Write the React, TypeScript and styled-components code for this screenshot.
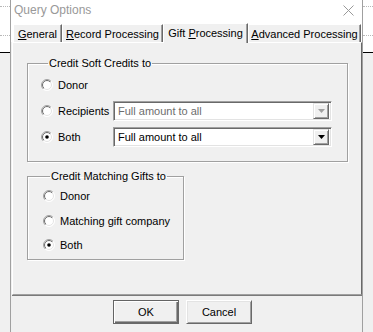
import React from 'react';
import styled, { createGlobalStyle } from 'styled-components';

const FONT = '"Liberation Sans", Arial, sans-serif';

const GlobalStyle = createGlobalStyle`
  html, body {
    margin: 0;
    padding: 0;
    background: #fff;
  }
  body {
    font-family: ${FONT};
    font-size: 11px;
    color: #000;
  }
`;

const Screen = styled.div`
  display: flex;
  width: 373px;
  height: 332px;
  overflow: hidden;
  background: #fff;
`;

const Backdrop = styled.div`
  width: 10px;
  display: flex;
  flex-direction: column;
`;

const GridLine = styled.div<{ $h: number; $solid?: boolean }>`
  height: ${(p) => p.$h}px;
  border-bottom: 1px ${(p) => (p.$solid ? 'solid #000' : 'dotted #b8b8b8')};
`;

const BackdropFill = styled.div`
  flex: 1;
  background: #f0f0f0;
`;

const Window = styled.div`
  width: 353px;
  box-sizing: border-box;
  border-left: 1px solid #a0a0a0;
  border-right: 1px solid #a0a0a0;
  display: flex;
  flex-direction: column;
  background: #f0f0f0;
`;

const TitleBar = styled.div`
  height: 20px;
  background: #fff;
  display: flex;
  align-items: center;
  justify-content: space-between;
  padding: 0 8px 2px 3px;
`;

const Title = styled.span`
  font-size: 12px;
  color: #999;
`;

const TabStrip = styled.div`
  height: 20px;
  background: #fff;
  display: flex;
  align-items: flex-start;
  padding-left: 2px;
  position: relative;
  z-index: 1;
`;

const Tab = styled.div<{ $w: number; $active?: boolean }>`
  width: ${(p) => p.$w}px;
  box-sizing: border-box;
  margin-top: ${(p) => (p.$active ? 1 : 2)}px;
  height: ${(p) => (p.$active ? 20 : 18)}px;
  background: #f0f0f0;
  border-top: 1px solid #fff;
  border-left: 1px solid #fff;
  border-right: 1px solid #696969;
  box-shadow: inset -1px 0 0 #a0a0a0;
  display: flex;
  align-items: center;
  justify-content: center;
  padding-bottom: ${(p) => (p.$active ? 2 : 0)}px;
  white-space: nowrap;
`;

const Panel = styled.div`
  margin-left: 1px;
  height: 253px;
  box-sizing: border-box;
  border-top: 1px solid #fff;
  border-left: 1px solid #fff;
  border-right: 1px solid #696969;
  border-bottom: 1px solid #a0a0a0;
  box-shadow: 0 1px 0 #7a7a7a;
  padding: 14px 0 0 14px;
  display: flex;
  flex-direction: column;
  align-items: flex-start;
`;

const Group = styled.fieldset<{ $w: number; $pad: string; $top?: number }>`
  width: ${(p) => p.$w}px;
  box-sizing: border-box;
  margin: ${(p) => p.$top ?? 0}px 0 0;
  padding: ${(p) => p.$pad};
  border: 1px solid #a0a0a0;
  box-shadow: inset 1px 1px 0 #fff, 1px 1px 0 #fff;
  display: flex;
  flex-direction: column;
`;

const Legend = styled.legend`
  padding: 0 1px;
  margin-left: 7px;
  line-height: 13px;
  font-size: 11px;
`;

const Row = styled.div<{ $gap?: number; $cols?: string }>`
  display: grid;
  grid-template-columns: ${(p) => p.$cols ?? '72px 219px'};
  align-items: center;
  height: 22px;
  margin-bottom: ${(p) => p.$gap ?? 0}px;
`;

const Choice = styled.label`
  display: flex;
  align-items: center;
  gap: 5px;
  white-space: nowrap;

  svg {
    flex-shrink: 0;
  }
`;

const Combo = styled.div<{ $disabled?: boolean }>`
  height: 20px;
  box-sizing: border-box;
  background: #fff;
  border-top: 1px solid #a0a0a0;
  border-left: 1px solid #a0a0a0;
  border-right: 1px solid #fff;
  border-bottom: 1px solid #fff;
  box-shadow: inset 1px 1px 0 #696969, inset -1px -1px 0 #e3e3e3;
  display: flex;
  align-items: center;
  padding: 2px 2px 2px 4px;
  color: ${(p) => (p.$disabled ? '#6d6d6d' : '#000')};
`;

const ComboText = styled.span`
  flex: 1;
`;

const DropButton = styled.div`
  width: 16px;
  height: 16px;
  box-sizing: border-box;
  background: #f0f0f0;
  border-top: 1px solid #e3e3e3;
  border-left: 1px solid #e3e3e3;
  border-right: 1px solid #696969;
  border-bottom: 1px solid #696969;
  box-shadow: inset 1px 1px 0 #fff, inset -1px -1px 0 #a0a0a0;
  display: flex;
  align-items: center;
  justify-content: center;
`;

const ButtonBar = styled.div`
  display: flex;
  justify-content: center;
  gap: 7px;
  padding: 5px 8px 0 0;
`;

const Button = styled.div<{ $default?: boolean }>`
  width: 66px;
  height: 24px;
  box-sizing: border-box;
  background: #f0f0f0;
  display: flex;
  align-items: center;
  justify-content: center;
  border: 1px solid ${(p) => (p.$default ? '#646464' : '#f0f0f0')};
  border-top-color: ${(p) => (p.$default ? '#646464' : '#fff')};
  border-left-color: ${(p) => (p.$default ? '#646464' : '#fff')};
  border-right-color: #696969;
  border-bottom-color: #696969;
  box-shadow: ${(p) =>
    p.$default
      ? 'inset 1px 1px 0 #fff, inset -1px -1px 0 #696969, inset -2px -2px 0 #a0a0a0'
      : 'inset 1px 1px 0 #e3e3e3, inset -1px -1px 0 #a0a0a0'};
`;

const Radio: React.FC<{ checked?: boolean }> = ({ checked }) => (
  <svg width="12" height="12" viewBox="0 0 12 12">
    <defs>
      <linearGradient id="rOuter" x1="0" y1="0" x2="1" y2="1">
        <stop offset="0.5" stopColor="#a0a0a0" />
        <stop offset="0.5" stopColor="#ffffff" />
      </linearGradient>
      <linearGradient id="rInner" x1="0" y1="0" x2="1" y2="1">
        <stop offset="0.5" stopColor="#696969" />
        <stop offset="0.5" stopColor="#e3e3e3" />
      </linearGradient>
    </defs>
    <circle cx="6" cy="6" r="5.5" fill="#fff" stroke="url(#rOuter)" strokeWidth="1" />
    <circle cx="6" cy="6" r="4.5" fill="#fff" stroke="url(#rInner)" strokeWidth="1" />
    {checked && <circle cx="6" cy="6" r="1.8" fill="#000" />}
  </svg>
);

const Arrow: React.FC<{ color: string }> = ({ color }) => (
  <svg width="7" height="4" viewBox="0 0 7 4">
    <path d="M0 0h7L3.5 4z" fill={color} />
  </svg>
);

const CloseIcon = () => (
  <svg width="11" height="11" viewBox="0 0 11 11">
    <path d="M0.5 0.5l10 10M10.5 0.5l-10 10" stroke="#999" strokeWidth="1" fill="none" />
  </svg>
);

const Backdrops = () => (
  <Backdrop>
    <GridLine $h={6} />
    <GridLine $h={28} />
    <GridLine $h={16} $solid />
    <BackdropFill />
  </Backdrop>
);

const App: React.FC = () => {
  return (
    <>
      <GlobalStyle />
      <Screen>
        <Backdrops />
        <Window>
          <TitleBar>
            <Title>Query Options</Title>
            <CloseIcon />
          </TitleBar>
          <TabStrip>
            <Tab $w={49}>
              <u>G</u>eneral
            </Tab>
            <Tab $w={101}>
              <u>R</u>ecord Processing
            </Tab>
            <Tab $w={85} $active>
              Gift&nbsp;<u>P</u>rocessing
            </Tab>
            <Tab $w={113}>
              <u>A</u>dvanced Processing
            </Tab>
          </TabStrip>
          <Panel>
            <Group $w={321} $pad="4px 0 13px 13px">
              <Legend>Credit Soft Credits to</Legend>
              <Row $gap={4}>
                <Choice>
                  <Radio />
                  Donor
                </Choice>
              </Row>
              <Row $gap={4}>
                <Choice>
                  <Radio />
                  Recipients
                </Choice>
                <Combo $disabled>
                  <ComboText>Full amount to all</ComboText>
                  <DropButton>
                    <Arrow color="#a0a0a0" />
                  </DropButton>
                </Combo>
              </Row>
              <Row>
                <Choice>
                  <Radio checked />
                  Both
                </Choice>
                <Combo>
                  <ComboText>Full amount to all</ComboText>
                  <DropButton>
                    <Arrow color="#000" />
                  </DropButton>
                </Combo>
              </Row>
            </Group>
            <Group $w={157} $pad="2px 0 3px 15px" $top={8}>
              <Legend>Credit Matching Gifts to</Legend>
              <Row $gap={3} $cols="1fr">
                <Choice>
                  <Radio />
                  Donor
                </Choice>
              </Row>
              <Row $gap={2} $cols="1fr">
                <Choice>
                  <Radio />
                  Matching gift company
                </Choice>
              </Row>
              <Row $cols="1fr">
                <Choice>
                  <Radio checked />
                  Both
                </Choice>
              </Row>
            </Group>
          </Panel>
          <ButtonBar>
            <Button $default>OK</Button>
            <Button>Cancel</Button>
          </ButtonBar>
        </Window>
        <Backdrops />
      </Screen>
    </>
  );
};

export default App;
